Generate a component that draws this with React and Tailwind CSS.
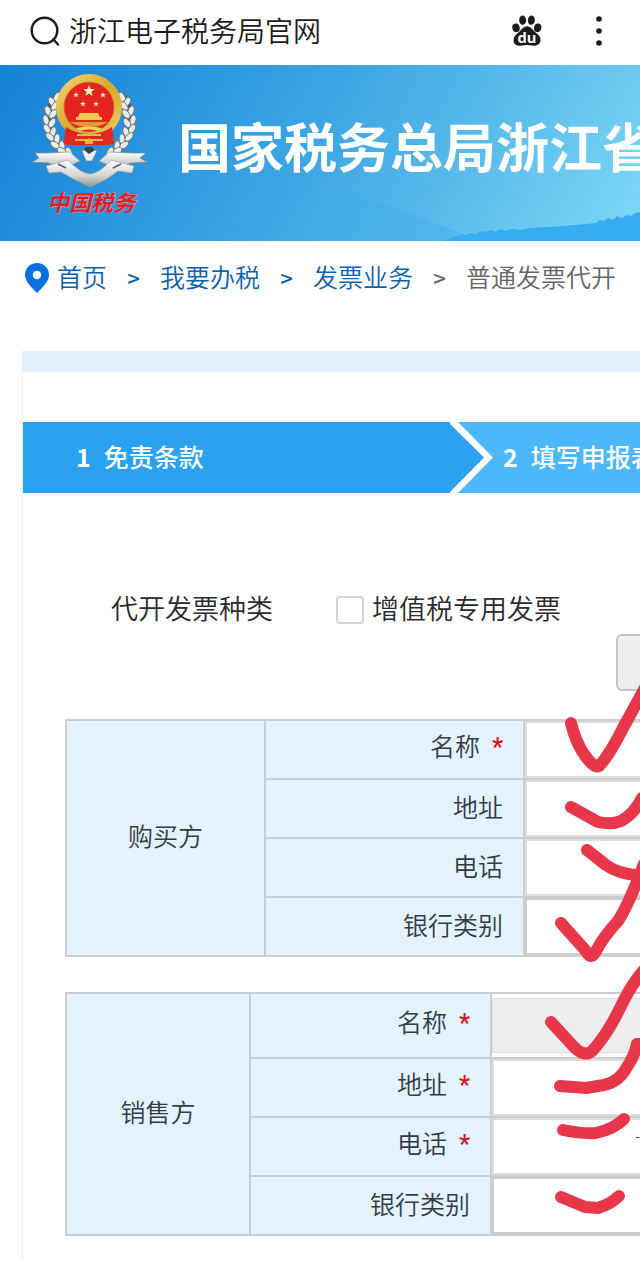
import React from 'react';

const crumbs = ['首页', '我要办税', '发票业务'];

const buyerRows = [
    { id: 'buyer-name', label: '名称', required: true },
    { id: 'buyer-address', label: '地址' },
    { id: 'buyer-phone', label: '电话' },
    { id: 'buyer-bank', label: '银行类别', type: 'select' },
];

const sellerRows = [
    { id: 'seller-name', label: '名称', required: true, type: 'readonly' },
    { id: 'seller-address', label: '地址', required: true },
    { id: 'seller-phone', label: '电话', required: true, value: '-' },
    { id: 'seller-bank', label: '银行类别', type: 'select' },
];

// x, y, rotation of each wreath leaf on the left half
const leaves = [
    [37, 37, 30], [32, 42, -30], [35, 46, 40], [28, 51, -20], [33, 54, 40], [26, 60, -15],
    [32, 63, 35], [27, 69, -30], [33, 72, 20], [30, 77, -45], [37, 79, 5], [35, 85, -55],
    [42, 86, -10], [42, 91, -65], [49, 92, -30],
];

const Paw = () => (
    <svg viewBox="0 0 90 92" className="h-[31px] w-[30px]" fill="currentColor">
        <ellipse cx="32" cy="15" rx="10.5" ry="14" transform="rotate(-4 32 15)" />
        <ellipse cx="58" cy="15" rx="10.5" ry="14" transform="rotate(6 58 15)" />
        <ellipse cx="12" cy="38" rx="11" ry="13" transform="rotate(-12 12 38)" />
        <ellipse cx="77" cy="38" rx="11" ry="13" transform="rotate(12 77 38)" />
        <path d="M45 33C57 33 62 45 71 52C82 61 88 68 85 79C82 91 70 93 60 91Q45 88 30 91C19 93 7 90 5 79C3 67 9 60 19 52C29 45 33 33 45 33Z" />
        <text x="45" y="83" textAnchor="middle" fontSize="44" fontWeight="700" fill="#fff" className="font-['Open_Sans',sans-serif]">du</text>
    </svg>
);

const SearchBar = () => (
    <header className="flex h-[65px] items-center bg-white pb-1 pl-[30px] pr-[36px] text-[#1c1c1c]">
        <svg viewBox="0 0 30 30" className="mr-[9px] h-[30px] w-[30px] shrink-0" fill="none" stroke="currentColor" strokeWidth="2.4">
            <circle cx="14.5" cy="14.5" r="12.8" />
            <path d="M23.5 23.5L28 28.5" strokeLinecap="round" />
        </svg>
        <h1 className="grow whitespace-nowrap pb-0.5 text-[28px] font-[350] leading-9">浙江电子税务局官网</h1>
        <button type="button" aria-label="百度" className="mr-[52px]">
            <Paw />
        </button>
        <button type="button" aria-label="更多">
            <svg viewBox="0 0 10 32" className="h-8 w-[10px]" fill="currentColor">
                <circle cx="5" cy="4" r="2.8" />
                <circle cx="5" cy="16" r="2.8" />
                <circle cx="5" cy="28" r="2.8" />
            </svg>
        </button>
    </header>
);

const Wreath = () => (
    <g>
        <path d="M38 34C24 50 22 76 50 95" fill="none" stroke="#4d5558" strokeWidth="5" />
        {leaves.map(([x, y, r]) => (
            <ellipse key={`${x}-${y}`} cx={x} cy={y} rx="2.9" ry="5.2" transform={`rotate(${r} ${x} ${y})`} fill="#e9ebe8" stroke="#6f7675" strokeWidth="0.9" />
        ))}
    </g>
);

const star = 'M0 -6L1.5 -2H5.8L2.4 0.7L3.6 5L0 2.4L-3.6 5L-2.4 0.7L-5.8 -2H-1.5Z';

const Emblem = () => (
    <svg viewBox="0 0 140 170" className="h-[170px] w-[140px] shrink-0">
        <defs>
            <linearGradient id="gold" x1="0" y1="0" x2="1" y2="1">
                <stop offset="0" stopColor="#f2d470" />
                <stop offset="0.5" stopColor="#d9a52f" />
                <stop offset="1" stopColor="#f0cb58" />
            </linearGradient>
            <linearGradient id="silver" x1="0" y1="0" x2="0" y2="1">
                <stop offset="0" stopColor="#ffffff" />
                <stop offset="0.6" stopColor="#d2d3cf" />
                <stop offset="1" stopColor="#8f9391" />
            </linearGradient>
        </defs>
        <Wreath />
        <g transform="translate(139 0) scale(-1 1)"><Wreath /></g>
        <path d="M46 66L44 84Q57 86 69 85Q82 86 94 84L92 66Z" fill="#e3261f" />
        <circle cx="69" cy="47" r="29" fill="#e6241f" stroke="url(#gold)" strokeWidth="8" />
        <circle cx="69" cy="47" r="25" fill="none" stroke="#b98120" strokeWidth="0.8" />
        <path d="M46 67Q56 74 69 74Q82 74 92 67L94 84L80 85L69 78L58 85L44 84Z" fill="#e3261f" />
        <g fill="#fff0c0">
            <path d={star} transform="translate(69 31)" />
            <path d={star} transform="translate(56 35) scale(0.5)" />
            <path d={star} transform="translate(83 35) scale(0.5)" />
            <path d={star} transform="translate(63 44) scale(0.5)" />
            <path d={star} transform="translate(76 44) scale(0.5)" />
        </g>
        <path d="M60 53H78L80 57H82V60H56V57H58Z" fill="#efc64e" />
        <path d="M50 62H88Q80 67 69 67Q58 67 50 62Z" fill="#d8a232" />
        <path d="M56 68Q69 65 82 68L79 71Q69 68 59 71Z" fill="#f1ce60" />
        <path d="M55 79H83V81H73V84H65V81H55Z" fill="#e9b944" />
        <path d="M57 74H81V76H57Z" fill="#e9b944" />
        <path d="M62 91L69 87L77 91L72 101H66Z" fill="#eceeed" stroke="#7b8385" strokeWidth="0.8" />
        <path d="M64 90L69 94L75 90L72 87H66Z" fill="#34434b" />
        <path d="M27 93L50 92L60 101L44 109L28 103L12 102L19 98L15 93Z" fill="url(#silver)" stroke="#7f8b91" strokeWidth="0.7" />
        <path d="M112 93L89 92L79 101L95 109L111 103L127 102L120 98L126 93Z" fill="url(#silver)" stroke="#7f8b91" strokeWidth="0.7" />
        <path d="M26 106L48 100Q60 113 70 114Q80 113 91 100L114 106L112 113L98 111Q86 121 70 127Q54 120 41 112L29 113Z" fill="url(#silver)" stroke="#9a9e9b" strokeWidth="0.7" />
        <path d="M38 104L46 108M101 104L93 108" stroke="#596469" strokeWidth="1.6" />
        <text x="27" y="151" fontSize="22" fontWeight="700" fontStyle="italic" fill="#dc1f26" stroke="#f0b9bd" strokeWidth="0.6" paintOrder="stroke">
            中国税务
        </text>
    </svg>
);

const Banner = () => (
    <div className="relative flex h-44 overflow-hidden bg-linear-[120deg] from-[#1482d8] via-[#3fa7e4] via-50% to-[#7ed8f6] pl-5">
        <svg viewBox="0 0 640 176" preserveAspectRatio="none" className="absolute inset-0 h-full w-full">
            <defs>
                <linearGradient id="ridge" x1="0" y1="0" x2="1" y2="0">
                    <stop offset="0" stopColor="#2f9ce2" stopOpacity="0" />
                    <stop offset="1" stopColor="#4ab4ee" />
                </linearGradient>
            </defs>
            <path d="M200 88Q290 108 340 124L400 145L466 170L440 176H200Z" fill="url(#ridge)" opacity="0.7" />
            <path d="M442 176L462 169L466 170L470 168L476 169L480 166L486 167L490 165L496 167L500 164L506 166L512 164L520 165L530 163L550 162L575 160L596 158L600 155L604 156L608 153L613 155L617 151L622 153L627 150L631 151L635 148L640 147V176Z" fill="#37acf1" />
        </svg>
        <div className="relative flex items-center pb-4">
            <Emblem />
            <span className="ml-[18px] whitespace-nowrap text-[53px] font-bold leading-[64px] text-white">国家税务总局浙江省税务局</span>
        </div>
    </div>
);

const Breadcrumb = () => (
    <nav className="flex h-[74px] items-center whitespace-nowrap pl-6 text-[25px] font-[350] leading-8 text-[#0c61b0]">
        <svg viewBox="0 0 26 32" className="mr-[7px] h-8 w-[26px] shrink-0">
            <path d="M13 1C6 1 1 6 1 13C1 19 7 25 13 31C19 25 25 19 25 13C25 6 20 1 13 1Z" fill="#0a6fe0" />
            <circle cx="13" cy="13" r="4.2" fill="#fff" />
        </svg>
        {crumbs.map((name, i) => (
            <React.Fragment key={name}>
                <a href="#" className="pb-1">{name}</a>
                <span className={`w-[53px] pb-0.5 text-center text-[22px] font-medium ${i === 2 ? 'text-[#666]' : ''}`}>&gt;</span>
            </React.Fragment>
        ))}
        <span className="pb-1 text-[#666]">普通发票代开</span>
    </nav>
);

const Steps = () => (
    <ol className="flex h-[71px] items-stretch overflow-hidden whitespace-nowrap bg-[#4db7fd] text-[25px] font-medium leading-9 text-white">
        <li className="flex w-[427px] shrink-0 items-center bg-[#2aa2ef] pb-1 pl-[53px]">
            <span className="mr-[13px] font-bold">1</span>免责条款
        </li>
        <li className="flex">
            <svg viewBox="0 0 43 71" className="mr-[10px] h-[71px] w-[43px]">
                <path d="M0 0L34 35.5L0 71Z" fill="#2aa2ef" />
                <path d="M0 0H8L43 35.5L8 71H0V70L34 35.5L0 2Z" fill="#fff" />
            </svg>
            <div className="flex items-center pb-1">
                <span className="mr-[13px] font-bold">2</span>填写申报表
            </div>
        </li>
    </ol>
);

const Field = ({ row }) => {
    if (row.type === 'select') {
        return <select id={row.id} className="block h-[57px] w-full appearance-none border-2 border-r-0 border-[#ccc] bg-white" />;
    }
    if (row.type === 'readonly') {
        return <input id={row.id} readOnly className="my-1 block h-[55px] w-full border border-r-0 border-[#ddd] bg-[#eee]" />;
    }
    return <input id={row.id} defaultValue={row.value} className="block h-[57px] w-full border-2 border-r-0 border-[#ddd] bg-white pb-6 text-right text-sm" />;
};

const PartyTable = ({ title, rows, titleWidth, labelWidth }) => (
    <table className="w-full table-fixed border-collapse text-[25px] font-[350] leading-8 text-[#333b44]">
        <colgroup>
            <col className={titleWidth} />
            <col className={labelWidth} />
            <col />
        </colgroup>
        <tbody>
            {rows.map((row, i) => (
                <tr key={row.id}>
                    {i === 0 && (
                        <th rowSpan={rows.length} scope="rowgroup" className="border-2 border-[#c9ced2] bg-[#e4f2fe] pb-1.5 font-[350]">{title}</th>
                    )}
                    <td className="border-2 border-[#c9ced2] bg-[#e4f2fe] pb-1.5 pr-5 text-right">
                        <label htmlFor={row.id}>
                            {row.label}
                            {row.required && <span className="ml-3 font-['Roboto',sans-serif] font-medium text-[#d4141c]">*</span>}
                        </label>
                    </td>
                    <td className="border-2 border-r-0 border-[#ccc] p-0">
                        <Field row={row} />
                    </td>
                </tr>
            ))}
        </tbody>
    </table>
);

// Hand-drawn check marks over the input cells
const Marks = () => (
    <svg viewBox="0 0 120 640" className="pointer-events-none absolute left-[520px] top-[640px] h-[640px] w-[120px]" fill="none" stroke="#e8364a" strokeWidth="12" strokeLinecap="round" strokeLinejoin="round">
        <path d="M51 83Q56 104 66 117Q76 130 80 125Q90 114 103 88L126 46" />
        <path d="M51 167L78 182Q92 185 101 181Q114 174 122 158" />
        <path d="M67 210L86 225Q98 234 122 236" />
        <path d="M41 283L66 311Q71 321 76 311Q84 296 98 281Q108 266 124 224" />
        <path d="M31 382L54 407Q66 419 74 409Q89 392 104 360Q112 344 124 330" />
        <path d="M40 446L66 448L84 445Q99 442 107 427Q114 417 117 404L124 404" />
        <path d="M43 490Q62 494 76 493Q94 489 104 479" />
        <path d="M41 557L65 567L78 568Q91 564 99 556" />
    </svg>
);

export default function App() {
    return (
        <div className="relative min-h-[1261px] overflow-hidden bg-white font-['Noto_Sans_CJK_SC',sans-serif]">
            <SearchBar />
            <Banner />
            <Breadcrumb />
            <main className="ml-[22px] mt-9 border-l border-[#e4f1fd]">
                <div className="h-[21px] bg-[#e4f1fd]" />
                <div className="pt-[50px]">
                    <Steps />
                </div>
                <form className="pb-7 pl-[42px] pt-24">
                    <div className="flex h-[42px] items-center whitespace-nowrap pl-[46px] text-[27px] font-[350] text-[#2b2b2b]">
                        <span className="mr-[63px] pb-1">代开发票种类</span>
                        <input id="special" type="checkbox" className="mr-2 h-7 w-7 appearance-none rounded-sm border-2 border-[#d3d3d3] bg-white" />
                        <label htmlFor="special" className="pb-1">增值税专用发票</label>
                    </div>
                    <div className="mb-7 mt-[3px] flex justify-end">
                        <button type="button" aria-label="操作" className="h-[57px] w-6 rounded-l-md border-2 border-r-0 border-[#c4c4c4] bg-[#eee]" />
                    </div>
                    <PartyTable title="购买方" rows={buyerRows} titleWidth="w-[199px]" labelWidth="w-[259px]" />
                    <div className="h-[35px]" />
                    <PartyTable title="销售方" rows={sellerRows} titleWidth="w-[184px]" labelWidth="w-[241px]" />
                </form>
            </main>
            <Marks />
        </div>
    );
}
